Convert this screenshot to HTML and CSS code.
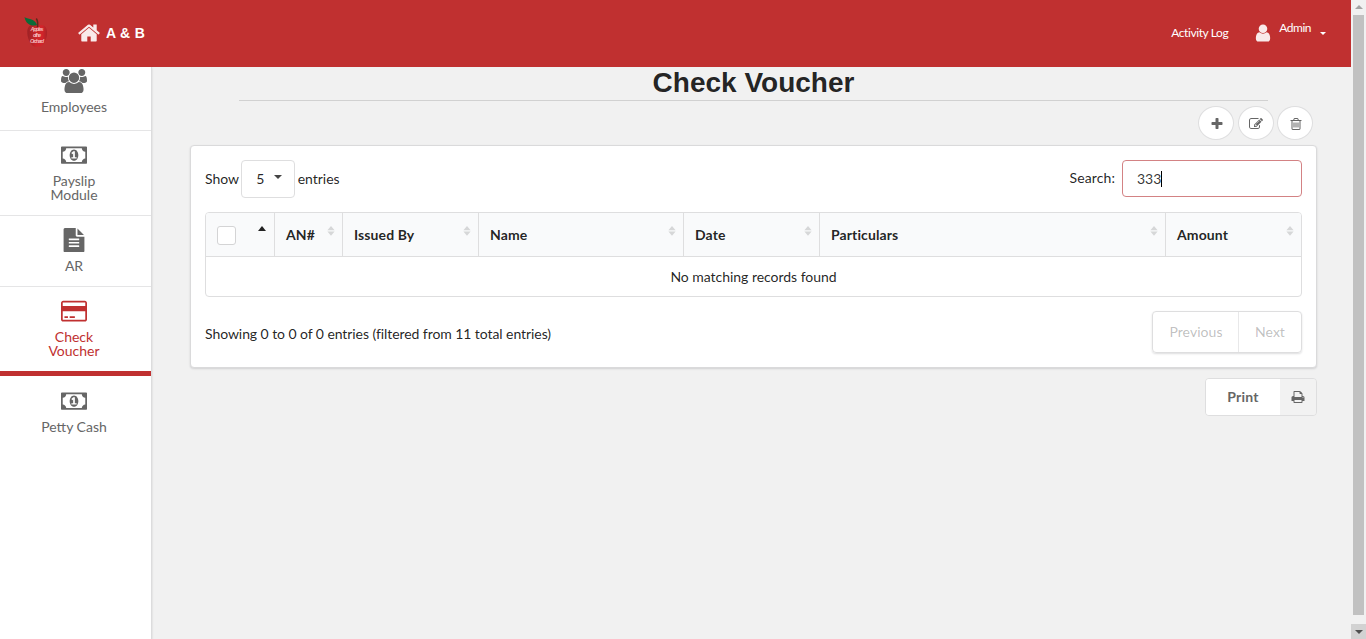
FILE: index.html
```html
<!DOCTYPE html>
<html lang="en">
<head>
<meta charset="utf-8">
<title>Check Voucher</title>
<link rel="stylesheet" href="styles.css">
</head>
<body>
<svg class="defs" aria-hidden="true">
  <symbol id="money" viewBox="0 0 1920 1792"><path d="M768 1152h384v-96h-128v-448h-114l-148 137 77 80q42-37 55-57h2v288h-128v96zm512-256q0 70-21 142t-59.5 134-101.5 101-138 39-138-39-101.5-101-59.5-134-21-142 21-142 59.5-134 101.5-101 138-39 138 39 101.5 101 59.5 134 21 142zm512 256v-512q-106 0-181-75t-75-181h-1152q0 106-75 181t-181 75v512q106 0 181 75t75 181h1152q0-106 75-181t181-75zm128-832v1152q0 26-19 45t-45 19h-1792q-26 0-45-19t-19-45v-1152q0-26 19-45t45-19h1792q26 0 45 19t19 45z"/></symbol>
  <symbol id="sort" viewBox="0 0 8 10"><path d="M0.4 4.2L4 0l3.6 4.2zM0.4 5.6h7.2L4 9.8z"/></symbol>
</svg>
<div class="page">
  <header class="topbar">
    <svg class="logo" viewBox="0 0 26 32">
      <defs><linearGradient id="apple" x1="0" x2="1"><stop offset="0" stop-color="#9c2225"/><stop offset=".45" stop-color="#cc2429"/><stop offset=".75" stop-color="#d3242a"/><stop offset="1" stop-color="#a92327"/></linearGradient></defs>
      <path fill="url(#apple)" d="M14 9C10 6 4 7 3.300 14C3 21 6 27 10 29.500C12 30.500 13 29 15 29.500C19 30 22 24 23 18C24 9 19 6 14 9z"/>
      <path fill="none" stroke="#5c2a1c" stroke-width="1.500" d="M13.500 10C14 6 14 4 12.300 1.500"/>
      <path fill="#0b6b38" d="M0.500 0C3 2.500 11 1 13 8C8 9.500 2 8 0.500 0z"/>
      <g class="logo-text"><text x="13" y="14" textLength="13">Apples</text><text x="13" y="20" textLength="8">of the</text><text x="13" y="25.500" textLength="14">Orchard</text></g>
    </svg>
    <svg class="home" viewBox="0 0 1792 1792"><path d="M1472 992v480q0 26-19 45t-45 19h-384v-384h-256v384h-384q-26 0-45-19t-19-45v-480q0-1 .5-3t.5-3l575-474 575 474q1 2 1 6zm223-69l-62 74q-8 9-21 11h-3q-13 0-21-7l-692-577-692 577q-12 8-24 7-13-2-21-11l-62-74q-8-10-7-23.500t11-21.500l719-599q32-26 76-26t76 26l244 204v-195q0-14 9-23t23-9h192q14 0 23 9t9 23v408l219 182q10 8 11 21.500t-7 23.500z"/></svg>
    <span class="brand">A &amp; B</span>
    <span class="log">Activity Log</span>
    <svg class="user" viewBox="0 0 1792 1792"><path d="M1536 1399q0 109-62.500 187t-150.500 78h-854q-88 0-150.500-78t-62.500-187q0-85 8.500-160.500t31.500-152 58.500-131 94-89 134.500-34.500q131 128 313 128t313-128q76 0 134.500 34.500t94 89 58.500 131 31.500 152 8.500 160.500zm-256-887q0 159-112.500 271.500t-271.500 112.500-271.500-112.500-112.500-271.500 112.500-271.500 271.500-112.500 271.500 112.500 112.500 271.500z"/></svg>
    <span class="admin">Admin</span>
    <span class="admin-caret"></span>
  </header>
  <div class="body">
    <nav class="sidebar">
      <a class="item item-first"><svg class="nav-icon" viewBox="-64 0 1920 1792"><path d="M529 896q-162 5-265 128h-134q-82 0-138-40.500t-56-118.500q0-353 124-353 6 0 43.500 21t97.500 42.500 119 21.500q67 0 133-23-5 37-5 66 0 139 81 256zm1071 637q0 120-73 189.500t-194 69.500h-874q-121 0-194-69.500t-73-189.500q0-53 3.500-103.500t14-109 26.500-108.500 43-97.500 62-81 85.500-53.500 111.500-20q10 0 43 21.500t73 48 107 48 135 21.500 135-21.500 107-48 73-48 43-21.500q61 0 111.500 20t85.500 53.500 62 81 43 97.500 26.500 108.500 14 109 3.500 103.500zm-1024-1277q0 106-75 181t-181 75-181-75-75-181 75-181 181-75 181 75 75 181zm704 384q0 159-112.500 271.500t-271.500 112.500-271.500-112.500-112.500-271.500 112.500-271.500 271.500-112.500 271.500 112.500 112.500 271.500zm576 225q0 78-56 118.500t-138 40.500h-134q-103-123-265-128 81-117 81-256 0-29-5-66 66 23 133 23 59 0 119-21.500t97.500-42.500 43.500-21q124 0 124 353zm-128-609q0 106-75 181t-181 75-181-75-75-181 75-181 181-75 181 75 75 181z"/></svg><span>Employees</span></a>
      <a class="item"><svg class="nav-icon"><use href="#money"/></svg><span>Payslip Module</span></a>
      <a class="item"><svg class="nav-icon" viewBox="0 0 1792 1792"><path d="M1596 476q14 14 28 36h-472v-472q22 14 36 28zm-476 164h544v1056q0 40-28 68t-68 28h-1344q-40 0-68-28t-28-68v-1600q0-40 28-68t68-28h800v544q0 40 28 68t68 28zm160 736v-64q0-14-9-23t-23-9h-704q-14 0-23 9t-9 23v64q0 14 9 23t23 9h704q14 0 23-9t9-23zm0-256v-64q0-14-9-23t-23-9h-704q-14 0-23 9t-9 23v64q0 14 9 23t23 9h704q14 0 23-9t9-23zm0-256v-64q0-14-9-23t-23-9h-704q-14 0-23 9t-9 23v64q0 14 9 23t23 9h704q14 0 23-9t9-23z"/></svg><span>AR</span></a>
      <a class="item item-active"><svg class="nav-icon" viewBox="0 0 1920 1792"><path d="M1760 128q66 0 113 47t47 113v1216q0 66-47 113t-113 47h-1600q-66 0-113-47t-47-113v-1216q0-66 47-113t113-47h1600zm-1600 128q-13 0-22.500 9.500t-9.500 22.500v224h1664v-224q0-13-9.500-22.500t-22.500-9.500h-1600zm1600 1280q13 0 22.500-9.500t9.500-22.500v-608h-1664v608q0 13 9.500 22.500t22.500 9.500h1600zm-1504-128v-128h256v128h-256zm384 0v-128h384v128h-384z"/></svg><span>Check Voucher</span></a>
      <a class="item item-last"><svg class="nav-icon"><use href="#money"/></svg><span>Petty Cash</span></a>
    </nav>
    <main class="content">
      <h1>Check Voucher</h1>
      <div class="actions">
        <button class="round"><svg viewBox="0 0 1792 1792"><path d="M1600 736v192q0 40-28 68t-68 28h-416v416q0 40-28 68t-68 28h-192q-40 0-68-28t-28-68v-416h-416q-40 0-68-28t-28-68v-192q0-40 28-68t68-28h416v-416q0-40 28-68t68-28h192q40 0 68 28t28 68v416h416q40 0 68 28t28 68z"/></svg></button>
        <button class="round"><svg viewBox="0 0 1792 1792"><path d="M888 1184l116-116-152-152-116 116v56h96v96h56zm440-720q-16-16-33 1l-350 350q-17 17-1 33t33-1l350-350q17-17 1-33zm80 594v190q0 119-84.500 203.500t-203.500 84.500h-832q-119 0-203.500-84.500t-84.500-203.500v-832q0-119 84.500-203.500t203.500-84.500h832q63 0 117 25 15 7 18 23 3 17-9 29l-49 49q-14 14-32 8-23-6-45-6h-832q-66 0-113 47t-47 113v832q0 66 47 113t113 47h832q66 0 113-47t47-113v-126q0-13 9-22l64-64q15-15 35-7t20 29zm-96-738l288 288-672 672h-288v-288zm444 132l-92 92-288-288 92-92q28-28 68-28t68 28l152 152q28 28 28 68t-28 68z"/></svg></button>
        <button class="round"><svg viewBox="0 0 1792 1792"><path d="M704 736v576q0 14-9 23t-23 9h-64q-14 0-23-9t-9-23v-576q0-14 9-23t23-9h64q14 0 23 9t9 23zm256 0v576q0 14-9 23t-23 9h-64q-14 0-23-9t-9-23v-576q0-14 9-23t23-9h64q14 0 23 9t9 23zm256 0v576q0 14-9 23t-23 9h-64q-14 0-23-9t-9-23v-576q0-14 9-23t23-9h64q14 0 23 9t9 23zm128 724v-948h-896v948q0 22 7 40.500t14.500 27 10.500 8.500h832q3 0 10.500-8.500t14.500-27 7-40.500zm-672-1076h448l-48-117q-7-9-17-11h-317q-10 2-17 11zm928 32v64q0 14-9 23t-23 9h-96v948q0 83-47 143.500t-113 60.500h-832q-66 0-113-58.500t-47-141.500v-952h-96q-14 0-23-9t-9-23v-64q0-14 9-23t23-9h309l70-167q15-37 54-63t79-26h320q40 0 79 26t54 63l70 167h309q14 0 23 9t9 23z"/></svg></button>
      </div>
      <section class="card">
        <div class="controls">
          <span class="show">Show</span>
          <div class="select"><span>5</span><i class="caret"></i></div>
          <span class="show">entries</span>
          <span class="search-label">Search:</span>
          <div class="search">333<i class="cursor"></i></div>
        </div>
        <div class="table">
          <div class="row">
            <div class="th"><i class="checkbox"></i><i class="ascending"></i></div>
            <div class="th"><span>AN#</span><svg class="sort"><use href="#sort"/></svg></div>
            <div class="th"><span>Issued By</span><svg class="sort"><use href="#sort"/></svg></div>
            <div class="th"><span>Name</span><svg class="sort"><use href="#sort"/></svg></div>
            <div class="th"><span>Date</span><svg class="sort"><use href="#sort"/></svg></div>
            <div class="th"><span>Particulars</span><svg class="sort"><use href="#sort"/></svg></div>
            <div class="th"><span>Amount</span><svg class="sort"><use href="#sort"/></svg></div>
          </div>
          <div class="empty">No matching records found</div>
        </div>
        <div class="footer">
          <span class="info">Showing 0 to 0 of 0 entries (filtered from 11 total entries)</span>
          <div class="pager"><span class="prev">Previous</span><span class="next">Next</span></div>
        </div>
      </section>
      <div class="print">
        <span class="print-text">Print</span>
        <span class="print-icon"><svg viewBox="0 0 1792 1792"><path d="M448 1536h896v-256h-896v256zm0-640h896v-384h-160q-40 0-68-28t-28-68v-160h-640v640zm1152 64q0-26-19-45t-45-19-45 19-19 45 19 45 45 19 45-19 19-45zm128 0v416q0 13-9.500 22.500t-22.500 9.500h-224v160q0 40-28 68t-68 28h-960q-40 0-68-28t-28-68v-160h-224q-13 0-22.500-9.500t-9.500-22.500v-416q0-79 56.500-135.500t135.500-56.500h64v-544q0-40 28-68t68-28h672q40 0 88 20t76 48l152 152q28 28 48 76t20 88v256h64q79 0 135.500 56.500t56.500 135.500z"/></svg></span>
      </div>
    </main>
  </div>
</div>
<div class="scrollbar"><i class="up"></i><div class="thumb"></div><div class="down"><i></i></div></div>
</body>
</html>
```
FILE: styles.css
```css
* { box-sizing: border-box; }
body {
  margin: 0;
  height: 639px;
  overflow: hidden;
  display: grid;
  grid-template-columns: 1351px 15px;
  font: 14px/20px Lato, "Liberation Sans", sans-serif;
  color: rgba(0, 0, 0, .87);
  background: #f1f1f1;
}
svg { display: block; fill: currentColor; flex: none; }
.defs { position: absolute; width: 0; height: 0; }
.page { display: flex; flex-direction: column; height: 639px; }

.topbar {
  height: 67px;
  flex: none;
  display: flex;
  align-items: center;
  padding: 0 25px 1px 24px;
  background: #c03030;
  color: rgba(255, 255, 255, .9);
}
.logo { width: 26px; height: 32px; margin-right: 27px; }
.logo-text { font: italic bold 5.500px "Liberation Sans", sans-serif; fill: #f3b6b8; text-anchor: middle; }
.home { width: 24px; height: 24px; }
.brand { margin-left: 5px; font: bold 14px/20px "Liberation Sans", sans-serif; letter-spacing: .3px; color: #fff; }
.log { margin-left: auto; font-size: 12px; letter-spacing: -.4px; color: #fff; }
.user { width: 20px; height: 20px; margin-left: 25px; }
.admin { margin: -10px 9px 0 6px; font-size: 12px; letter-spacing: -.5px; color: #fff; }
.admin-caret { border: 3px solid transparent; border-top-color: #fff; border-bottom: 0; }

.body { flex: 1; display: flex; }
.sidebar { width: 152px; flex: none; background: #fff; border-right: 1px solid #dcdcdd; box-shadow: 0 1px 2px rgba(34, 36, 38, .15); }
.item {
  display: flex;
  flex-direction: column;
  align-items: center;
  height: 71px;
  padding: 12px 44px 0;
  border-bottom: 1px solid #e5e5e6;
  line-height: 14px;
  text-align: center;
  color: #666;
}
.item span { margin-right: 3px; }
.item .nav-icon { margin-right: 4px; }
.item:nth-child(2) { height: 85px; }
.item-first { height: 64px; padding: 2px 0 0; }
.item-active { height: 89px; border-bottom: 5px solid #c03030; color: #c03030; }
.item-last { border: 0; padding: 13px 0 0; }
.nav-icon { width: 26px; height: 24.300px; margin-bottom: 7px; }

.content { flex: 1; display: flex; flex-direction: column; padding: 0 34px 0 38px; }
h1 {
  height: 34px;
  margin: 0 49px;
  border-bottom: 1px solid #d1d1d1;
  font: bold 28px/31px "Liberation Sans", sans-serif;
  text-align: center;
}
.actions { display: flex; justify-content: flex-end; gap: 3.500px; margin: 5px 4px 5px 0; height: 34px; }
.round {
  width: 36px;
  height: 34px;
  padding: 2px 0 0 1px;
  display: grid;
  place-items: center;
  border: 1px solid #dededf;
  border-radius: 50%;
  background: #fff;
  color: #666;
}
.round svg { width: 14px; height: 14px; }

.card {
  height: 223px;
  padding: 14px;
  border: 1px solid #dadadb;
  border-radius: 4px;
  background: #fff;
  box-shadow: 0 1px 2px rgba(34, 36, 38, .15);
}
.controls { display: flex; align-items: center; height: 38px; }
.select {
  display: flex;
  align-items: center;
  width: 54px;
  height: 38px;
  margin: 0 2px;
  padding-left: 14px;
  border: 1px solid #dededf;
  border-radius: 4px;
}
.show:nth-child(3) { margin-left: .5px; }
.caret { margin: -4px 0 0 10px; border: 4px solid transparent; border-top-color: #444; border-bottom: 0; }
.search-label { margin: -2px 7px 0 auto; letter-spacing: .1px; }
.search {
  display: flex;
  align-items: center;
  width: 180px;
  height: 37px;
  margin-bottom: 1px;
  padding-left: 14px;
  border: 1px solid #d38284;
  border-radius: 4px;
  color: rgba(0, 0, 0, .8);
}
.cursor { width: 1px; height: 16px; background: #000; }

.table { margin-top: 14px; border: 1px solid #dededf; border-radius: 4px; overflow: hidden; }
.row { display: grid; grid-template-columns: 68px 68px 136px 205px 136px 346px 136px; height: 44px; border-bottom: 1px solid #dededf; background: #f9fafb; }
.th { display: flex; align-items: center; padding: 2px 8px 0 11px; border-right: 1px solid #dededf; font-weight: bold; }
.th span { margin-top: -2px; letter-spacing: .1px; }
.th:nth-child(1) { width: 69px; padding-right: 9px; }
.th:nth-child(n+2) { margin-left: 1px; margin-right: -1px; }
.th:last-child { border: 0; margin-right: 0; }
.sort { width: 8px; height: 10px; margin: -10px -1px 0 auto; color: #d6d7d8; }
.checkbox { width: 19px; height: 19px; border: 1px solid #d4d4d5; border-radius: 3px; background: #fff; }
.ascending { margin: -15px -1px 0 auto; border: 4.500px solid transparent; border-bottom: 5px solid #222; border-top: 0; }
.empty { height: 39px; line-height: 40px; text-align: center; letter-spacing: -.03px; }

.footer { display: flex; align-items: flex-start; margin-top: 14px; height: 43px; }
.info { margin-top: 13px; letter-spacing: -.07px; }
.pager {
  display: flex;
  height: 42px;
  margin-left: auto;
  border: 1px solid #dededf;
  border-radius: 4px;
  box-shadow: 0 1px 2px rgba(34, 36, 38, .15);
  line-height: 40px;
  text-align: center;
  color: rgba(40, 40, 40, .3);
}
.prev { width: 86px; padding-left: 1px; letter-spacing: .05px; border-right: 1px solid #e8e8e9; }
.next { width: 62px; }

.print { display: flex; width: 112px; height: 38px; margin: 10px 0 0 auto; border: 1px solid #dededf; border-radius: 4px; overflow: hidden; color: #666; }
.print-text { width: 74px; line-height: 36px; text-align: center; font-weight: bold; letter-spacing: .2px; background: #fff; }
.print-icon { flex: 1; display: grid; place-items: center; background: #f2f2f2; }
.print-icon svg { width: 14px; height: 14px; }

.scrollbar { display: flex; flex-direction: column; align-items: center; height: 639px; background: #f1f1f1; }
.up { margin: 5px 0 5px; border: 4px solid transparent; border-bottom: 4px solid #a3a3a3; border-top: 0; }
.thumb { width: 11px; height: 600px; margin-top: 1px; background: #c1c1c1; }
.down { width: 15px; height: 15px; margin-top: auto; display: grid; place-items: center; background: #d2d2d2; }
.down i { border: 4px solid transparent; border-top-color: #505050; border-bottom: 0; }
```
